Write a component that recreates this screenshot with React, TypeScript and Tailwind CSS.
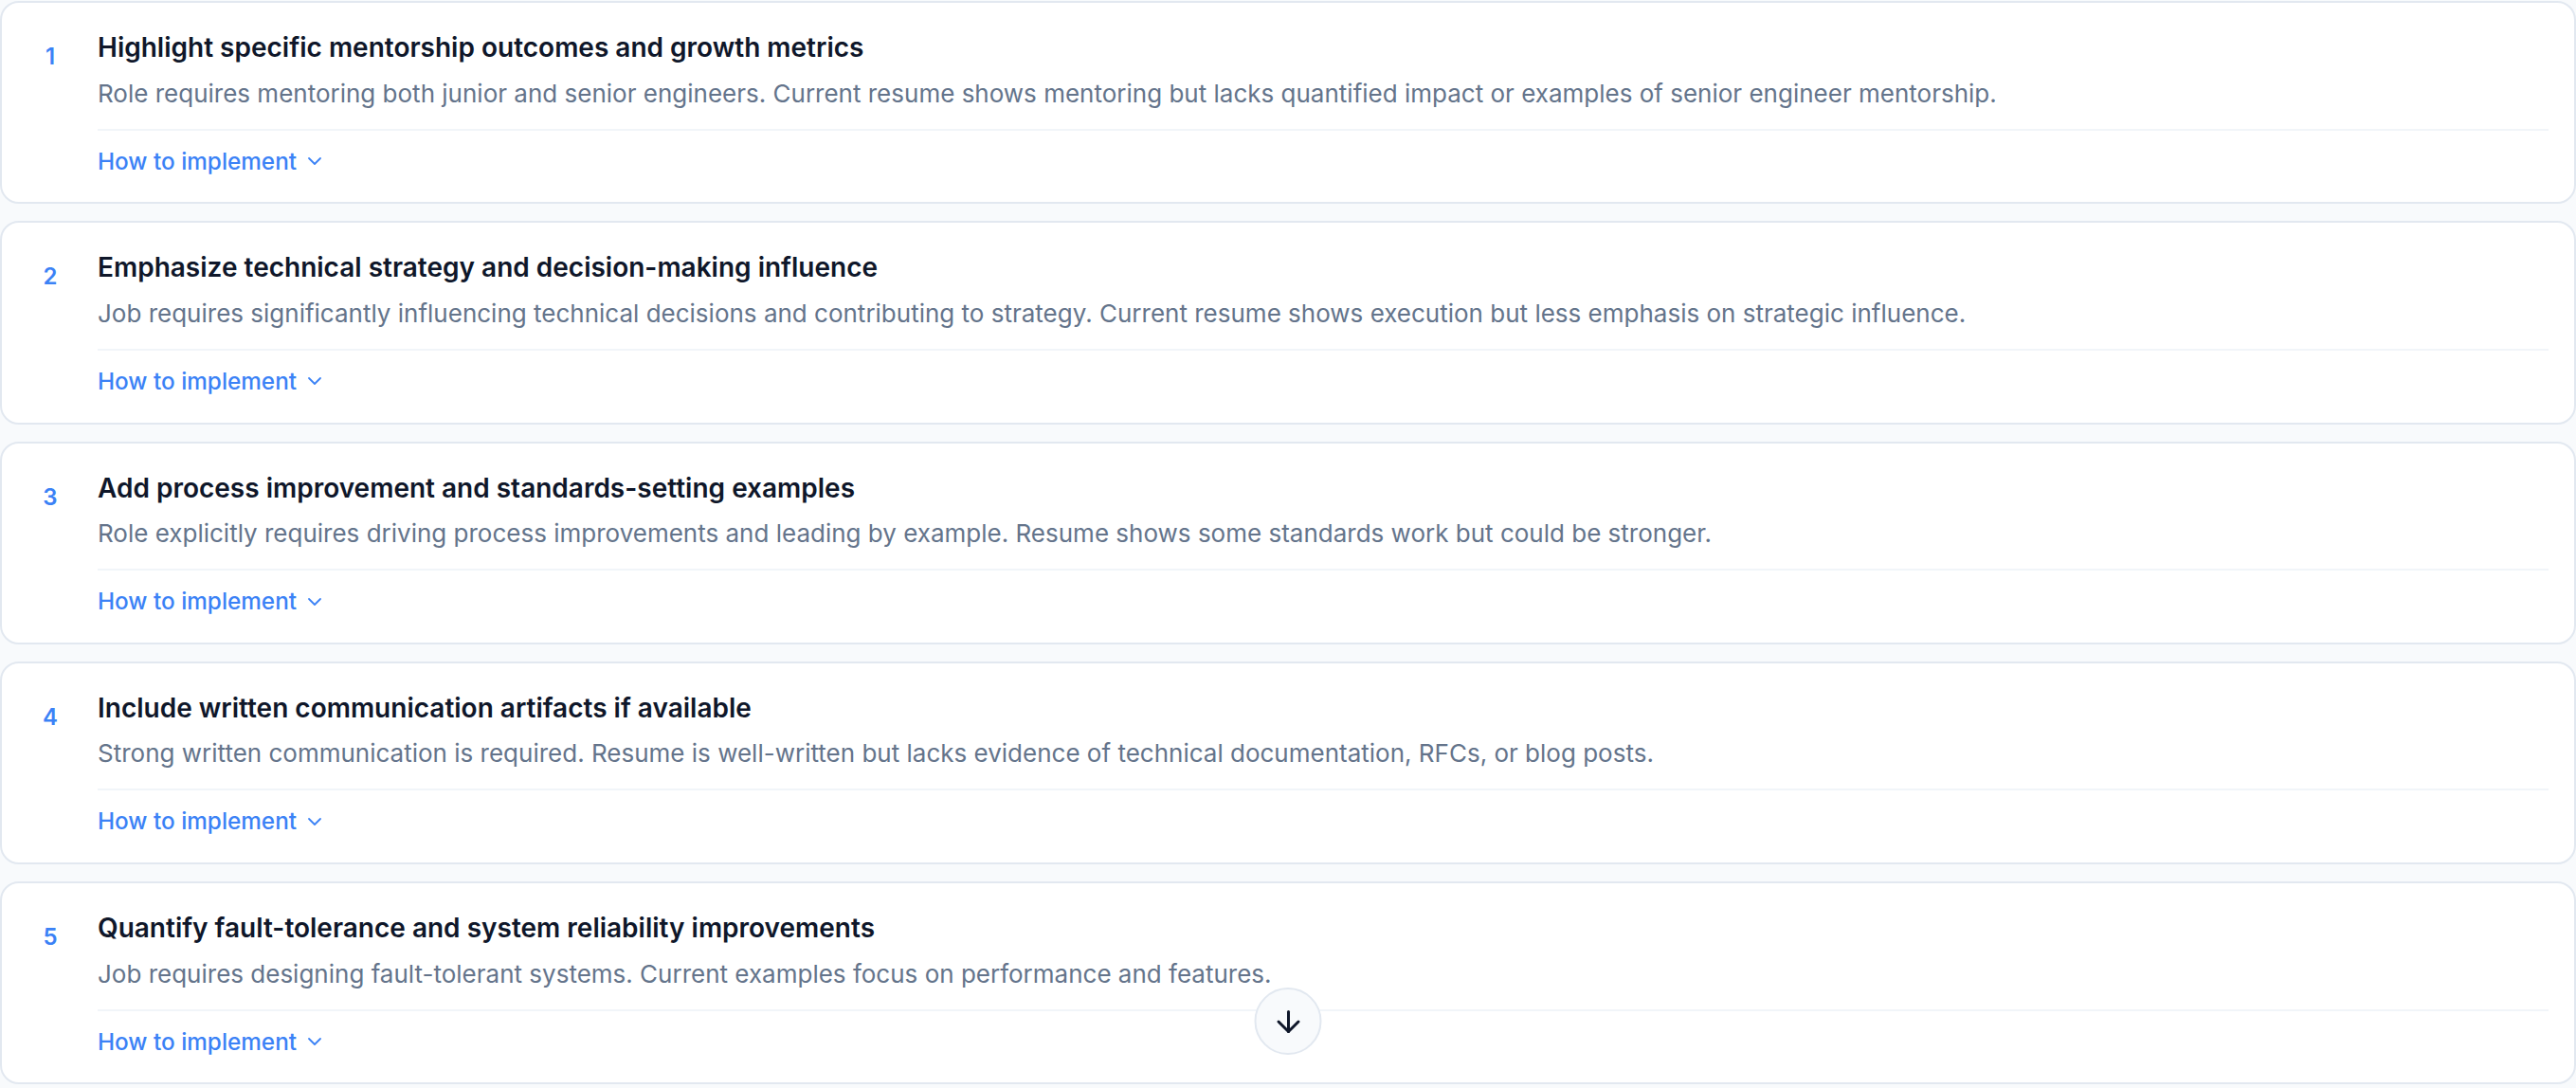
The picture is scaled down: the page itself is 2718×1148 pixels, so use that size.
import { ArrowDown, ChevronDown } from 'lucide-react'

interface Suggestion {
  title: string
  reason: string
}

const suggestions: Suggestion[] = [
  {
    title: 'Highlight specific mentorship outcomes and growth metrics',
    reason:
      'Role requires mentoring both junior and senior engineers. Current resume shows mentoring but lacks quantified impact or examples of senior engineer mentorship.',
  },
  {
    title: 'Emphasize technical strategy and decision-making influence',
    reason:
      'Job requires significantly influencing technical decisions and contributing to strategy. Current resume shows execution but less emphasis on strategic influence.',
  },
  {
    title: 'Add process improvement and standards-setting examples',
    reason:
      'Role explicitly requires driving process improvements and leading by example. Resume shows some standards work but could be stronger.',
  },
  {
    title: 'Include written communication artifacts if available',
    reason:
      'Strong written communication is required. Resume is well-written but lacks evidence of technical documentation, RFCs, or blog posts.',
  },
  {
    title: 'Quantify fault-tolerance and system reliability improvements',
    reason:
      'Job requires designing fault-tolerant systems. Current examples focus on performance and features.',
  },
]

function SuggestionCard({ index, item }: { index: number; item: Suggestion }) {
  return (
    <div className="flex rounded-[20px] border-2 border-[#e2e8f0] bg-white pl-[26px] pr-[27px] pt-[27px] pb-[26px]">
      {/* Number column */}
      <div className="w-[50px] shrink-0 pt-[9px] text-center text-[24px] font-semibold leading-[41px] text-[#3b82f6]">
        {index}
      </div>

      <div className="ml-[25px] flex-1">
        <h3 className="text-[28px] font-semibold leading-[41.6px] text-[#0f172a]">
          {item.title}
        </h3>
        <p className="mt-[7px] text-[26px] leading-[39px] text-[#64748b]">
          {item.reason}
        </p>
        <div className="mt-[18px] h-[2px] bg-[#f1f5f9]" />
        <button className="mt-[15px] flex items-center gap-[7px] text-[24.3px] font-medium leading-[34.7px] text-[#3b82f6]">
          How to implement
          <ChevronDown size={24} strokeWidth={1.8} />
        </button>
      </div>
    </div>
  )
}

export default function App() {
  return (
    <div
      className="relative min-h-screen bg-[#f8fafc] pt-px"
      style={{ fontFamily: 'Inter, "Noto Sans", sans-serif' }}
    >
      <div className="flex flex-col gap-[18px]">
        {suggestions.map((s, i) => (
          <SuggestionCard key={i} index={i + 1} item={s} />
        ))}
      </div>

      {/* Scroll-to-bottom button */}
      <button className="fixed bottom-[35px] left-1/2 flex h-[71px] w-[71px] -translate-x-1/2 items-center justify-center rounded-full border-2 border-[#e2e8f0] bg-[#f8fafc] text-[#0f172a]">
        <ArrowDown size={36} strokeWidth={2} />
      </button>
    </div>
  )
}
